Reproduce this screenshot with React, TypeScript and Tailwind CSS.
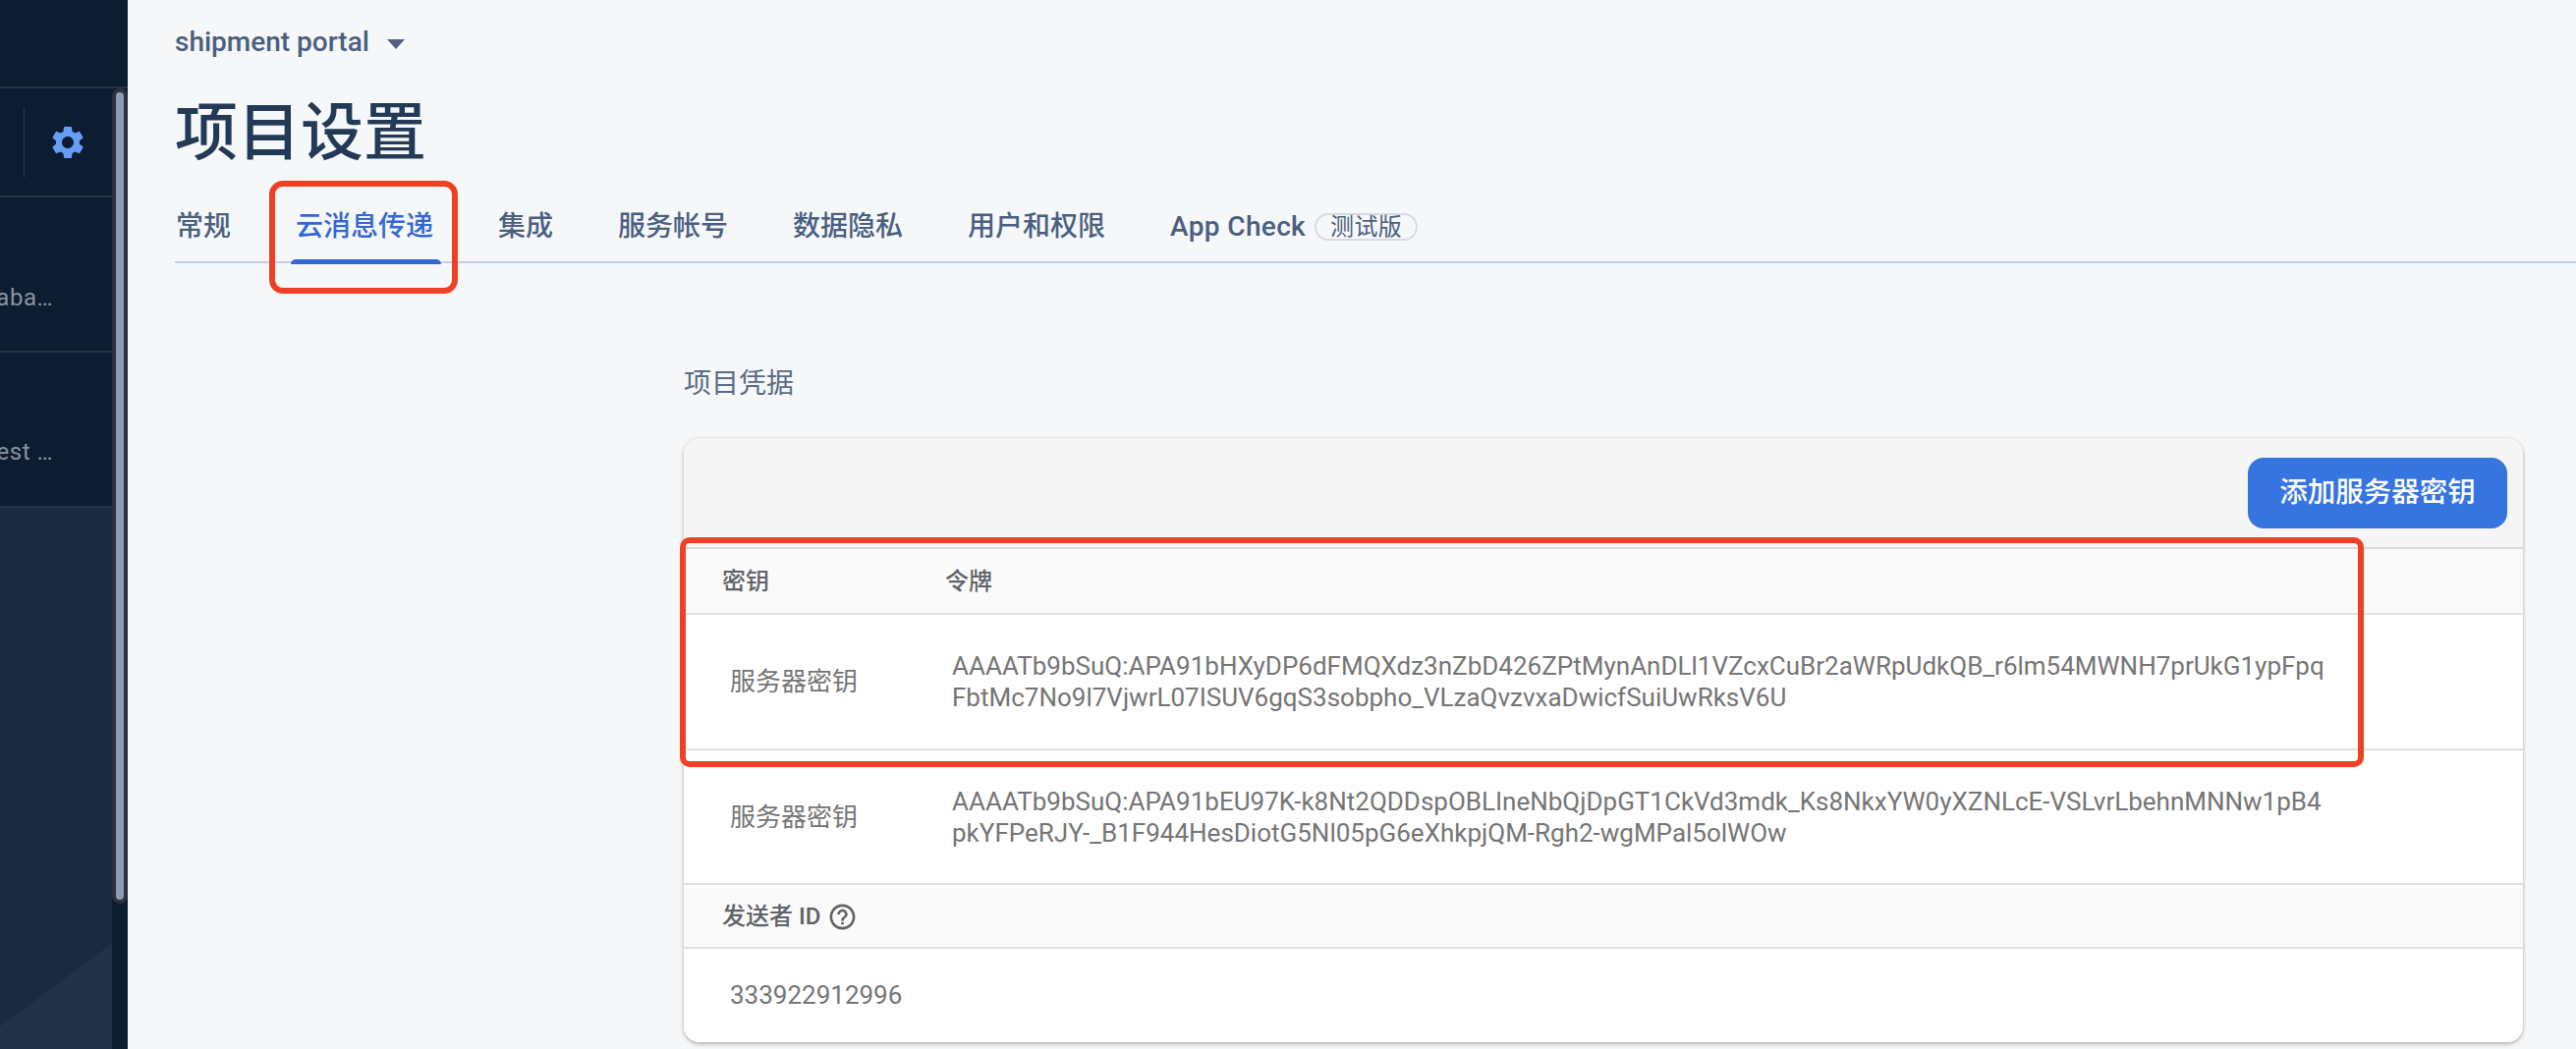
const FONT = "font-['Roboto','Noto_Sans_CJK_SC',sans-serif]";

const tabs = ["常规", "云消息传递", "集成", "服务帐号", "数据隐私", "用户和权限"];

function Gear() {
  return (
    <svg viewBox="0 0 24 24" className="w-10 h-10" fill="#669df6">
      <path d="M19.14 12.94c.04-.3.06-.61.06-.94 0-.32-.02-.64-.07-.94l2.03-1.58c.18-.14.23-.41.12-.61l-1.92-3.32c-.12-.22-.37-.29-.59-.22l-2.39.96c-.5-.38-1.03-.7-1.62-.94l-.36-2.54c-.04-.24-.24-.41-.48-.41h-3.84c-.24 0-.43.17-.47.41l-.36 2.54c-.59.24-1.13.57-1.62.94l-2.39-.96c-.22-.08-.47 0-.59.22L2.74 8.87c-.12.21-.08.47.12.61l2.03 1.58c-.05.3-.09.63-.09.94s.02.64.07.94l-2.03 1.58c-.18.14-.23.41-.12.61l1.92 3.32c.12.22.37.29.59.22l2.39-.96c.5.38 1.03.7 1.62.94l.36 2.54c.05.24.24.41.48.41h3.84c.24 0 .44-.17.47-.41l.36-2.54c.59-.24 1.13-.56 1.62-.94l2.39.96c.22.08.47 0 .59-.22l1.92-3.32c.12-.22.07-.47-.12-.61l-2.01-1.58zM12 15.6c-1.98 0-3.6-1.62-3.6-3.6s1.62-3.6 3.6-3.6 3.6 1.62 3.6 3.6-1.62 3.6-3.6 3.6z" />
    </svg>
  );
}

function Help() {
  return (
    <svg viewBox="0 0 24 24" className="w-[31px] h-[31px]" fill="#616161">
      <path d="M11 18h2v-2h-2v2zm1-16C6.48 2 2 6.48 2 12s4.48 10 10 10 10-4.48 10-10S17.52 2 12 2zm0 18c-4.41 0-8-3.59-8-8s3.59-8 8-8 8 3.59 8 8-3.59 8-8 8zm0-14c-2.21 0-4 1.79-4 4h2c0-1.1.9-2 2-2s2 .9 2 2c0 2-3 1.75-3 5h2c0-2.25 3-2.5 3-5 0-2.21-1.79-4-4-4z" />
    </svg>
  );
}

function Sidebar() {
  return (
    <aside className="w-[130px] shrink-0 h-full flex flex-col bg-[#0c1c31]">
      <div className="h-[90px] shrink-0 border-b-2 border-[#263246]" />
      <div className="flex-1 flex min-h-0">
        <div className="w-[114px] flex flex-col">
          <div className="h-[111px] shrink-0 border-b-2 border-[#263246] flex items-center">
            <div className="w-[25px] h-[72px] border-r border-[#2b3a50]" />
            <div className="flex-1 flex justify-center pr-[2px]">
              <Gear />
            </div>
          </div>
          <div className="h-[158px] shrink-0 border-b-2 border-[#263246] flex items-center justify-end pr-[60px] pt-[48px] overflow-hidden">
            <span className="shrink-0 text-[24px] tracking-[0.5px] text-[#8a93a1] whitespace-nowrap">aba…</span>
          </div>
          <div className="h-[158px] shrink-0 border-b-2 border-[#263246] flex items-center justify-end pr-[60px] pt-[46px] overflow-hidden">
            <span className="shrink-0 text-[24px] tracking-[0.5px] text-[#8a93a1] whitespace-nowrap">est …</span>
          </div>
          <div className="flex-1 bg-[#1a2b41]">
            <svg viewBox="0 0 114 550" preserveAspectRatio="none" className="w-full h-full">
              <polygon points="0,527 114,443 114,550 0,550" fill="#233249" />
            </svg>
          </div>
        </div>
        <div className="w-4 shrink-0">
          <div className="h-[830px] bg-[#2a3240] rounded-full p-1">
            <div className="h-full w-2 bg-[#8f9bb3] rounded-full" />
          </div>
        </div>
      </div>
    </aside>
  );
}

function Tabs() {
  return (
    <div className="h-[76px] ml-[48px] border-b-2 border-[#c5d0de] flex items-start gap-[66px] pl-[1px] pt-[17px]">
      {tabs.map((t, i) => (
        <div key={t} className={`relative text-[28px] leading-[44px] font-medium whitespace-nowrap ${i === 1 ? "text-[#3367d6]" : "text-[#4a5f80]"}`}>
          {t}
          {i === 1 && <div className="absolute left-[-5px] right-[-8px] top-[55px] h-[5px] bg-[#3367d6] rounded-t-[6px]" />}
        </div>
      ))}
      <div className="flex items-center gap-[9px] text-[28px] leading-[44px] font-medium tracking-[0.35px] text-[#4a5f80] whitespace-nowrap">
        App Check
        <span className="h-[28px] w-[105px] border-2 border-[#d9dbdf] rounded-full flex items-center justify-center text-[24px] leading-none font-normal">测试版</span>
      </div>
    </div>
  );
}

function TokenRow({ a, b, h }: { a: string; b: string; h: string }) {
  return (
    <div className={`${h} bg-white border-b-2 border-[#e0e0e0] flex text-[#757575] text-[26px] leading-[32px]`}>
      <div className="w-[273px] shrink-0 pl-[47px] flex items-center">服务器密钥</div>
      <div className="pt-[36px] whitespace-nowrap">
        <div>{a}</div>
        <div>{b}</div>
      </div>
    </div>
  );
}

export default function App() {
  return (
    <div className={`${FONT} relative w-[2622px] h-[1068px] overflow-hidden flex bg-[#f6f7f9]`}>
      <Sidebar />
      <main className="flex-1 min-w-0 flex flex-col">
        <div className="ml-[48px] pt-[24px] h-[82px] flex items-start gap-[18px] text-[28px] leading-[38px] font-medium text-[#4a5f80]">
          <span>shipment portal</span>
          <svg viewBox="0 0 18 10" className="w-[18px] h-[10px] mt-[16px]" fill="#4f6280">
            <polygon points="0,0 18,0 9,10" />
          </svg>
        </div>
        <h1 className="ml-[48px] h-[110px] text-[64px] leading-[108px] font-medium text-[#233a57]">项目设置</h1>
        <Tabs />
        <div className="ml-[566px] mr-[54px] pt-[110px]">
          <div className="h-[30px] text-[28px] leading-[30px] text-[#5a6b82] mb-[40px] -mt-[2px]">项目凭据</div>
          <div className="rounded-[16px] overflow-hidden shadow-[0_2px_4px_rgba(60,64,67,0.35),0_0_2px_rgba(60,64,67,0.15)] bg-white">
            <div className="h-[113px] bg-[#f5f5f5] border-b-2 border-[#dadada] flex items-start justify-end pt-5 pr-4">
              <button className="w-[264px] h-[72px] bg-[#3674e0] rounded-[16px] text-white text-[28.5px] font-medium">添加服务器密钥</button>
            </div>
            <div className="h-[67px] bg-[#fafafa] border-b-2 border-[#e0e0e0] flex items-center pt-[1px] text-[24px] text-[#5f6368] font-medium">
              <div className="w-[266px] pl-[39px]">密钥</div>
              <div>令牌</div>
            </div>
            <TokenRow
              h="h-[138px]"
              a="AAAATb9bSuQ:APA91bHXyDP6dFMQXdz3nZbD426ZPtMynAnDLl1VZcxCuBr2aWRpUdkQB_r6lm54MWNH7prUkG1ypFpq"
              b="FbtMc7No9l7VjwrL07ISUV6gqS3sobpho_VLzaQvzvxaDwicfSuiUwRksV6U"
            />
            <TokenRow
              h="h-[137px]"
              a="AAAATb9bSuQ:APA91bEU97K-k8Nt2QDDspOBLIneNbQjDpGT1CkVd3mdk_Ks8NkxYW0yXZNLcE-VSLvrLbehnMNNw1pB4"
              b="pkYFPeRJY-_B1F944HesDiotG5Nl05pG6eXhkpjQM-Rgh2-wgMPal5olWOw"
            />
            <div className="h-[65px] bg-[#fafafa] border-b-2 border-[#e0e0e0] flex items-center gap-[7px] pl-[39px] pt-[1px] text-[24px] text-[#5f6368] font-medium">
              <span>发送者 ID</span>
              <Help />
            </div>
            <div className="h-[95px] bg-white flex items-center pl-[47px] text-[26px] text-[#757575]">333922912996</div>
          </div>
        </div>
      </main>
      <div className="absolute left-[274px] top-[184px] w-[192px] h-[115px] border-[6px] border-[#ee4024] rounded-[14px]" />
      <div className="absolute left-[692px] top-[547px] w-[1714px] h-[234px] border-[6px] border-[#ee4024] rounded-[10px]" />
    </div>
  );
}
